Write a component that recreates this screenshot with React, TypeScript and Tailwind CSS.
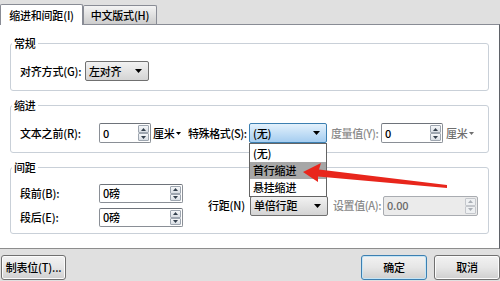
import React from 'react';

interface SpinProps {
  value: string;
  width: string;
  height?: string;
  disabled?: boolean;
}

function Caret({ className = '' }: { className?: string }) {
  return (
    <svg width="7" height="4" viewBox="0 0 7 4" className={className}>
      <path d="M0 0h7L3.5 4z" fill="currentColor" />
    </svg>
  );
}

function SpinButton({ up, disabled }: { up?: boolean; disabled?: boolean }) {
  return (
    <div
      className={`flex-1 flex items-center justify-center border rounded-[1px] ${
        disabled
          ? 'border-[#c4c7cc] bg-[#eef0f2] text-[#a9aeb5]'
          : 'border-[#9ea6b0] bg-gradient-to-b from-[#f5f7f9] to-[#d9dee4] text-[#34404d]'
      }`}
    >
      <svg width="5" height="3" viewBox="0 0 5 3">
        <path d={up ? 'M0 3h5L2.5 0z' : 'M0 0h5L2.5 3z'} fill="currentColor" />
      </svg>
    </div>
  );
}

function Spin({ value, width, height = 'h-[20px]', disabled }: SpinProps) {
  return (
    <div
      className={`shrink-0 flex ${width} ${height} border rounded-[2px] ${
        disabled ? 'border-[#a9acb1] bg-[#ebebeb] text-[#6a6a6a]' : 'border-[#8a8f96] border-t-[#6e737a] bg-white'
      }`}
    >
      <span className="flex-1 flex items-center pl-[3px]">{value}</span>
      <div className="flex flex-col w-[11px] my-[1px] mr-[1px]">
        <SpinButton up disabled={disabled} />
        <SpinButton disabled={disabled} />
      </div>
    </div>
  );
}

function Unit({ muted }: { muted?: boolean }) {
  return (
    <span className={`flex items-center gap-[1px] ${muted ? 'text-[#6f6f6f]' : ''}`}>
      厘米
      <svg width="5" height="3" viewBox="0 0 5 3">
        <path d="M0 0h5L2.5 3z" fill="currentColor" />
      </svg>
    </span>
  );
}

function Group({ title, className, children }: { title: string; className: string; children: React.ReactNode }) {
  return (
    <div className={`relative mx-[10px] border border-[#c9d0d8] rounded-[3px] ${className}`}>
      <span className="absolute left-[1px] -top-[8px] bg-white px-[2px] leading-[14px]">{title}</span>
      {children}
    </div>
  );
}

function Button({ label, width, primary }: { label: string; width: string; primary?: boolean }) {
  return (
    <div
      className={`${width} h-[25px] flex items-center justify-center rounded-[3px] border ${
        primary ? 'border-[#3c7fb1] shadow-[inset_0_0_0_1px_#c4e5f6]' : 'border-[#707070] shadow-[inset_0_0_0_1px_#fcfcfc]'
      } bg-gradient-to-b from-[#f2f2f2] via-[#e6e6e6] to-[#cfcfcf]`}
    >
      {label}
    </div>
  );
}

export default function App() {
  return (
    <div className="relative w-[500px] h-[281px] overflow-hidden flex flex-col bg-[#e0e0e0] text-[11px] font-medium tracking-[-0.2px] text-black whitespace-nowrap font-['Noto_Sans_CJK_SC',sans-serif]">
      {/* tabs */}
      <div className="h-[24px] flex items-end">
        <div className="relative z-10 -mb-px w-[83px] h-[21px] flex items-center justify-center bg-white border border-b-0 border-[#898c95] rounded-t-[2px]">
          缩进和间距(I)
        </div>
        <div className="w-[74px] h-[19px] flex items-center justify-center border border-b-0 border-[#898c95] rounded-t-[2px] bg-gradient-to-b from-[#f4f4f4] to-[#cdcdcd]">
          中文版式(H)
        </div>
      </div>

      {/* panel */}
      <div className="h-[225px] bg-white border-t border-r border-b border-t-[#898c95] border-r-[#5f6268] border-b-[#8d8d8d] flex flex-col">
        <Group title="常规" className="mt-[18px] h-[48px]">
          <div className="flex items-center pt-[17px] pl-[9px]">
            <span className="w-[65px] shrink-0">对齐方式(G):</span>
            <div className="w-[64px] h-[20px] flex items-center justify-between pl-[3px] pr-[6px] border border-[#707070] rounded-[2px] bg-gradient-to-b from-[#f2f2f2] to-[#d4d4d4]">
              左对齐
              <Caret />
            </div>
          </div>
        </Group>

        <Group title="缩进" className="mt-[14px] h-[48px]">
          <div className="flex items-center pt-[17px] pl-[9px]">
            <span className="w-[79px] shrink-0">文本之前(R):</span>
            <Spin value="0" width="w-[52px]" />
            <span className="w-[37px] shrink-0 pl-[2px] flex">
              <Unit />
            </span>
            <span className="w-[61px] shrink-0 tracking-[-0.4px]">特殊格式(S):</span>
            <div className="relative z-20 shrink-0 w-[78px] h-[20px] flex items-center justify-between pl-[3px] pr-[6px] border border-[#3c7fb1] rounded-[2px] bg-gradient-to-b from-[#e3f1fc] to-[#a5cdf0]">
              (无)
              <Caret />
              <div className="absolute left-[-1px] top-[19px] w-[78px] flex flex-col bg-white border border-[#646464]">
                <div className="h-[18px] flex items-center pl-[3px]">(无)</div>
                <div className="h-[17px] flex items-center pl-[3px] bg-[#a7a7a7]">首行缩进</div>
                <div className="h-[17px] flex items-center pl-[3px]">悬挂缩进</div>
              </div>
            </div>
            <span className="w-[50px] shrink-0 ml-[4px] text-[#8a8a8a] tracking-[-0.4px]">度量值(Y):</span>
            <Spin value="0" width="w-[62px]" />
            <span className="ml-[3px] flex">
              <Unit muted />
            </span>
          </div>
        </Group>

        <Group title="间距" className="mt-[14px] h-[67px]">
          <div className="flex items-center pt-[16px] pl-[9px]">
            <div className="flex flex-col gap-[5px] shrink-0">
              <div className="flex items-center">
                <span className="w-[79px] shrink-0">段前(B):</span>
                <Spin value="0磅" width="w-[84px]" height="h-[19px]" />
              </div>
              <div className="flex items-center">
                <span className="w-[79px] shrink-0">段后(E):</span>
                <Spin value="0磅" width="w-[84px]" height="h-[19px]" />
              </div>
            </div>
            <span className="w-[42px] shrink-0 ml-[25px]">行距(N)</span>
            <div className="shrink-0 w-[78px] h-[20px] flex items-center justify-between pl-[3px] pr-[6px] border border-[#707070] rounded-[2px] bg-gradient-to-b from-[#f2f2f2] to-[#d4d4d4]">
              单倍行距
              <Caret />
            </div>
            <span className="w-[50px] shrink-0 ml-[5px] text-[#8a8a8a] tracking-[-0.4px]">设置值(A):</span>
            <Spin value="0.00" width="w-[95px]" disabled />
          </div>
        </Group>
      </div>

      {/* bottom buttons */}
      <div className="flex-1 flex items-start justify-between pt-[6px] pl-[1px]">
        <Button label="制表位(T)..." width="w-[65px]" />
        <div className="flex gap-[7px]">
          <Button label="确定" width="w-[66px]" primary />
          <Button label="取消" width="w-[66px]" />
        </div>
      </div>

      {/* red arrow annotation */}
      <svg className="absolute inset-0 z-30 pointer-events-none" width="500" height="281" viewBox="0 0 500 281">
        <polygon
          points="303,172 321,163 319,169.5 447,185 447,188 318,176.5 318,182"
          fill="#e8261c"
        />
      </svg>
    </div>
  );
}
